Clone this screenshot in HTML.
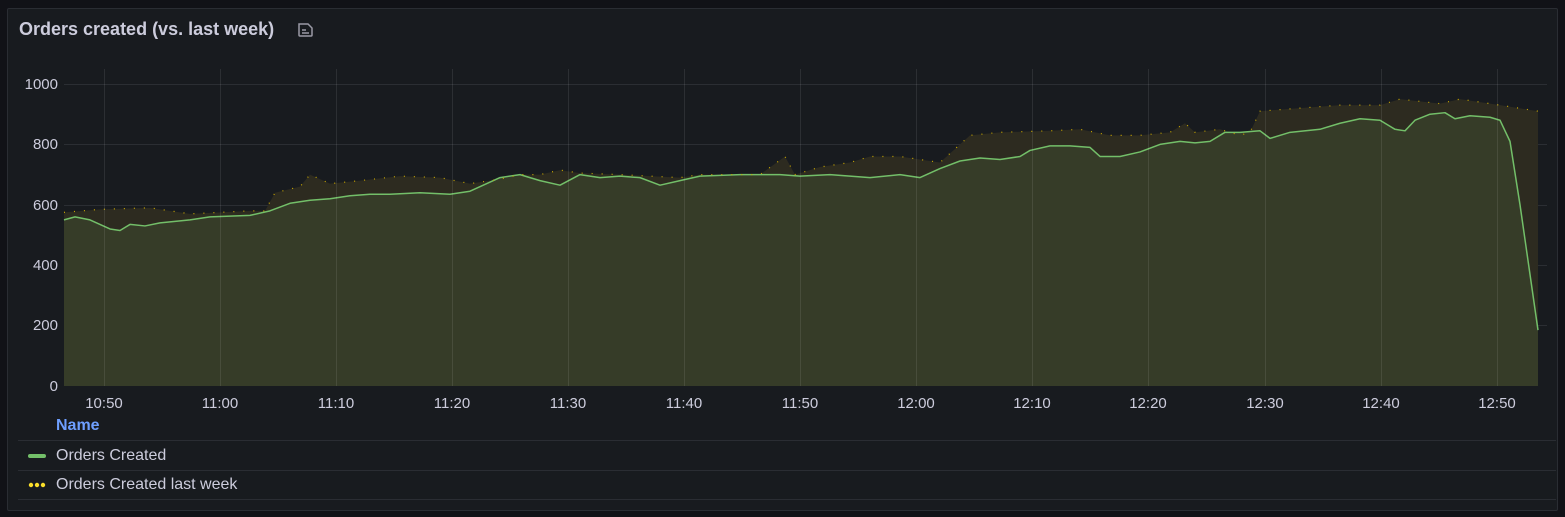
<!DOCTYPE html>
<html><head><style>
body{margin:0;background:#111217;width:1565px;height:517px;overflow:hidden;font-family:"Liberation Sans",sans-serif;}
.panel{position:absolute;left:7px;top:8px;width:1549px;height:501px;background:#181b1f;border:1px solid #2a2d33;border-radius:2px;}
.title{position:absolute;left:11px;top:10px;color:#ccccdc;font-size:18px;font-weight:bold;}
.yl{position:absolute;left:0;width:58px;text-align:right;color:#ccccdc;font-size:15px;}
.xl{position:absolute;top:395px;color:#ccccdc;font-size:15px;width:60px;text-align:center;}
.leg{position:absolute;left:18px;width:1538px;border-top:1px solid #2a2d33;}
.lt{position:absolute;left:56px;color:#ccccdc;font-size:16px;}
</style></head><body>
<div class="panel"><div class="title">Orders created (vs. last week)</div>
<svg style="position:absolute;left:289px;top:13px" width="18" height="16" viewBox="0 0 18 16"><path d="M2 2h9l4 4v7a1 1 0 0 1-1 1H3a1 1 0 0 1-1-1z" fill="none" stroke="#9a9aa6" stroke-width="1.5"/><path d="M5 8h4M5 11h7" stroke="#9a9aa6" stroke-width="1.5"/></svg>
</div>
<div class="yl" style="top:76px">1000</div><div class="yl" style="top:136px">800</div><div class="yl" style="top:197px">600</div><div class="yl" style="top:257px">400</div><div class="yl" style="top:317px">200</div><div class="yl" style="top:378px">0</div>
<svg style="position:absolute;left:0;top:0" width="1565" height="517">
<g stroke="#2b2e33" stroke-width="1">
<line x1="64" x2="1547" y1="84.5" y2="84.5"/><line x1="64" x2="1547" y1="144.5" y2="144.5"/><line x1="64" x2="1547" y1="205.5" y2="205.5"/><line x1="64" x2="1547" y1="265.5" y2="265.5"/><line x1="64" x2="1547" y1="325.5" y2="325.5"/>
</g>
<g transform="translate(0,386) scale(1,-0.302)">
<path fill="#2d2b20" d="M64 0L64 575L100 585L150 590L190 570L250 580L265 580L275 640L300 660L310 700L330 670L360 680L400 695L440 690L470 670L500 685L520 700L540 700L560 715L580 705L620 700L680 690L700 700L760 700L785 760L795 700L820 725L850 740L870 760L900 760L940 740L970 830L1000 840L1050 845L1080 850L1110 830L1140 830L1170 840L1185 870L1195 840L1220 850L1240 830L1250 840L1260 910L1300 920L1340 930L1380 930L1400 950L1440 935L1460 950L1500 930L1538 910L1538 0Z"/>
<path fill="#363c28" d="M64 0L64 550L75 560L90 550L110 520L120 515L130 535L145 530L160 540L190 550L210 560L250 565L270 580L290 605L310 615L330 620L350 630L370 635L390 635L420 640L450 635L470 645L500 690L520 700L540 680L560 665L580 700L600 690L620 695L640 690L660 665L680 680L700 695L740 700L780 700L800 695L830 700L870 690L900 700L920 690L940 720L960 745L980 755L1000 750L1020 760L1030 780L1050 795L1070 795L1090 790L1100 760L1120 760L1140 775L1160 800L1180 810L1195 805L1210 810L1225 840L1240 840L1260 845L1270 820L1290 840L1320 850L1340 870L1360 885L1380 880L1395 850L1405 845L1415 880L1430 900L1445 905L1455 885L1470 895L1490 890L1500 880L1510 810L1520 600L1538 185L1538 0Z"/>
<path fill="none" stroke="#73bf69" stroke-width="1.5" vector-effect="non-scaling-stroke" stroke-linejoin="round" d="M64 550L75 560L90 550L110 520L120 515L130 535L145 530L160 540L190 550L210 560L250 565L270 580L290 605L310 615L330 620L350 630L370 635L390 635L420 640L450 635L470 645L500 690L520 700L540 680L560 665L580 700L600 690L620 695L640 690L660 665L680 680L700 695L740 700L780 700L800 695L830 700L870 690L900 700L920 690L940 720L960 745L980 755L1000 750L1020 760L1030 780L1050 795L1070 795L1090 790L1100 760L1120 760L1140 775L1160 800L1180 810L1195 805L1210 810L1225 840L1240 840L1260 845L1270 820L1290 840L1320 850L1340 870L1360 885L1380 880L1395 850L1405 845L1415 880L1430 900L1445 905L1455 885L1470 895L1490 890L1500 880L1510 810L1520 600L1538 185"/>
<path fill="none" stroke="#c9a800" stroke-width="1.2" stroke-dasharray="1 9" vector-effect="non-scaling-stroke" d="M64 575L100 585L150 590L190 570L250 580L265 580L275 640L300 660L310 700L330 670L360 680L400 695L440 690L470 670L500 685L520 700L540 700L560 715L580 705L620 700L680 690L700 700L760 700L785 760L795 700L820 725L850 740L870 760L900 760L940 740L970 830L1000 840L1050 845L1080 850L1110 830L1140 830L1170 840L1185 870L1195 840L1220 850L1240 830L1250 840L1260 910L1300 920L1340 930L1380 930L1400 950L1440 935L1460 950L1500 930L1538 910"/>
</g>
<g stroke="#ffffff" stroke-opacity="0.09" stroke-width="1">
<line x1="104.5" x2="104.5" y1="69" y2="386"/><line x1="220.5" x2="220.5" y1="69" y2="386"/><line x1="336.5" x2="336.5" y1="69" y2="386"/><line x1="452.5" x2="452.5" y1="69" y2="386"/><line x1="568.5" x2="568.5" y1="69" y2="386"/><line x1="684.5" x2="684.5" y1="69" y2="386"/><line x1="800.5" x2="800.5" y1="69" y2="386"/><line x1="916.5" x2="916.5" y1="69" y2="386"/><line x1="1032.5" x2="1032.5" y1="69" y2="386"/><line x1="1148.5" x2="1148.5" y1="69" y2="386"/><line x1="1265.5" x2="1265.5" y1="69" y2="386"/><line x1="1381.5" x2="1381.5" y1="69" y2="386"/><line x1="1497.5" x2="1497.5" y1="69" y2="386"/>
</g>
</svg>
<div class="xl" style="left:74px">10:50</div><div class="xl" style="left:190px">11:00</div><div class="xl" style="left:306px">11:10</div><div class="xl" style="left:422px">11:20</div><div class="xl" style="left:538px">11:30</div><div class="xl" style="left:654px">11:40</div><div class="xl" style="left:770px">11:50</div><div class="xl" style="left:886px">12:00</div><div class="xl" style="left:1002px">12:10</div><div class="xl" style="left:1118px">12:20</div><div class="xl" style="left:1235px">12:30</div><div class="xl" style="left:1351px">12:40</div><div class="xl" style="left:1467px">12:50</div>
<div style="position:absolute;left:56px;top:417px;color:#6e9fff;font-size:16px;font-weight:bold">Name</div>
<div class="leg" style="top:440px"></div><div class="leg" style="top:470px"></div><div class="leg" style="top:499px"></div>
<div style="position:absolute;left:28px;top:454px;width:18px;height:4px;border-radius:2px;background:#73bf69"></div>
<div class="lt" style="top:447px">Orders Created</div>
<svg style="position:absolute;left:28px;top:482px" width="20" height="6"><circle cx="3" cy="3" r="2.2" fill="#fade2a"/><circle cx="9" cy="3" r="2.2" fill="#fade2a"/><circle cx="15" cy="3" r="2.2" fill="#fade2a"/></svg>
<div class="lt" style="top:476px">Orders Created last week</div>
</body></html>
